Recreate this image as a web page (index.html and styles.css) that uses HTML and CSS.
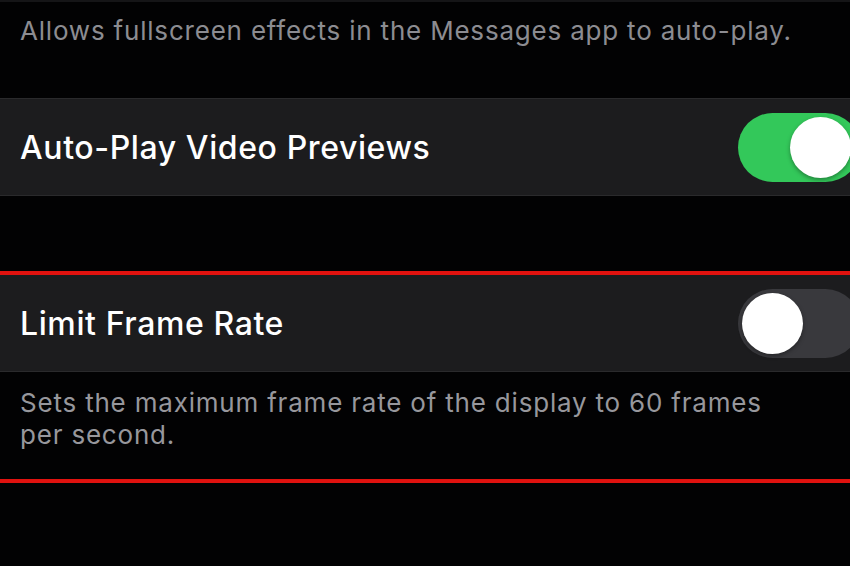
FILE: index.html
```html
<!DOCTYPE html>
<html lang="en">
<head>
    <meta charset="UTF-8">
    <meta name="viewport" content="width=device-width, initial-scale=1.0">
    <title>Accessibility - Motion</title>
    <link rel="stylesheet" href="styles.css">
</head>
<body>

<div class="settings">
    <!-- footer of the previous group -->
    <p class="note note-top">Allows fullscreen effects in the Messages app to auto-play.</p>

    <div class="row">
        <span class="row-label">Auto-Play Video Previews</span>
        <div class="switch on"><span class="knob"></span></div>
    </div>

    <div class="spacer"></div>

    <div class="mark"></div>

    <div class="row row-limit">
        <span class="row-label">Limit Frame Rate</span>
        <div class="switch"><span class="knob"></span></div>
    </div>

    <p class="note note-bottom">Sets the maximum frame rate of the display to 60 frames<br>per second.</p>

    <div class="mark"></div>
</div>

</body>
</html>
```

FILE: styles.css
```css
/* General styles */
html, body {
    margin: 0;
    padding: 0;
    background-color: #020203;
    overflow: hidden;
}

body {
    font-family: Inter, "Open Sans", "Liberation Sans", sans-serif;
    width: 850px;
    height: 566px;
}

.settings {
    display: flex;
    flex-direction: column;
    border-top: 2px solid #151517;
}

/* Group footer text */
.note {
    margin: 0;
    color: #8c8c91;
    font-size: 26px;
    letter-spacing: 0.8px;
}

.note-top {
    height: 96px;
    padding: 14px 0 0 20px;
    box-sizing: border-box;
    line-height: 30px;
}

.note-bottom {
    height: 107px;
    padding: 15px 0 0 20px;
    box-sizing: border-box;
    line-height: 32px;
    color: #97979c;
}

/* Setting rows */
.row {
    display: flex;
    justify-content: space-between;
    align-items: center;
    height: 98px;
    box-sizing: border-box;
    background-color: #1c1c1e;
    border-top: 1px solid #2a2a2c;
    border-bottom: 1px solid #2a2a2c;
    padding-left: 20px;
}

.row-limit {
    height: 97px;
    border-top: none;
}

.row-label {
    color: #fff;
    font-size: 32px;
    font-weight: 500;
    letter-spacing: 0.6px;
}

.spacer {
    height: 75px;
}

/* red highlight line */
.mark {
    height: 4px;
    background-color: #e0120f;
}

/* Switch */
.switch {
    width: 122px;
    height: 69px;
    border-radius: 35px;
    background-color: #39393d;
    margin-right: -10px;
    display: flex;
    align-items: center;
    padding: 0 4px;
    box-sizing: border-box;
    flex-shrink: 0;
}

.switch.on {
    background-color: #33c85a;
    justify-content: flex-end;
    padding-right: 9px;
}

.knob {
    width: 61px;
    height: 61px;
    border-radius: 50%;
    background-color: #fff;
    box-shadow: 0 2px 4px rgba(0, 0, 0, 0.35);
}
```
